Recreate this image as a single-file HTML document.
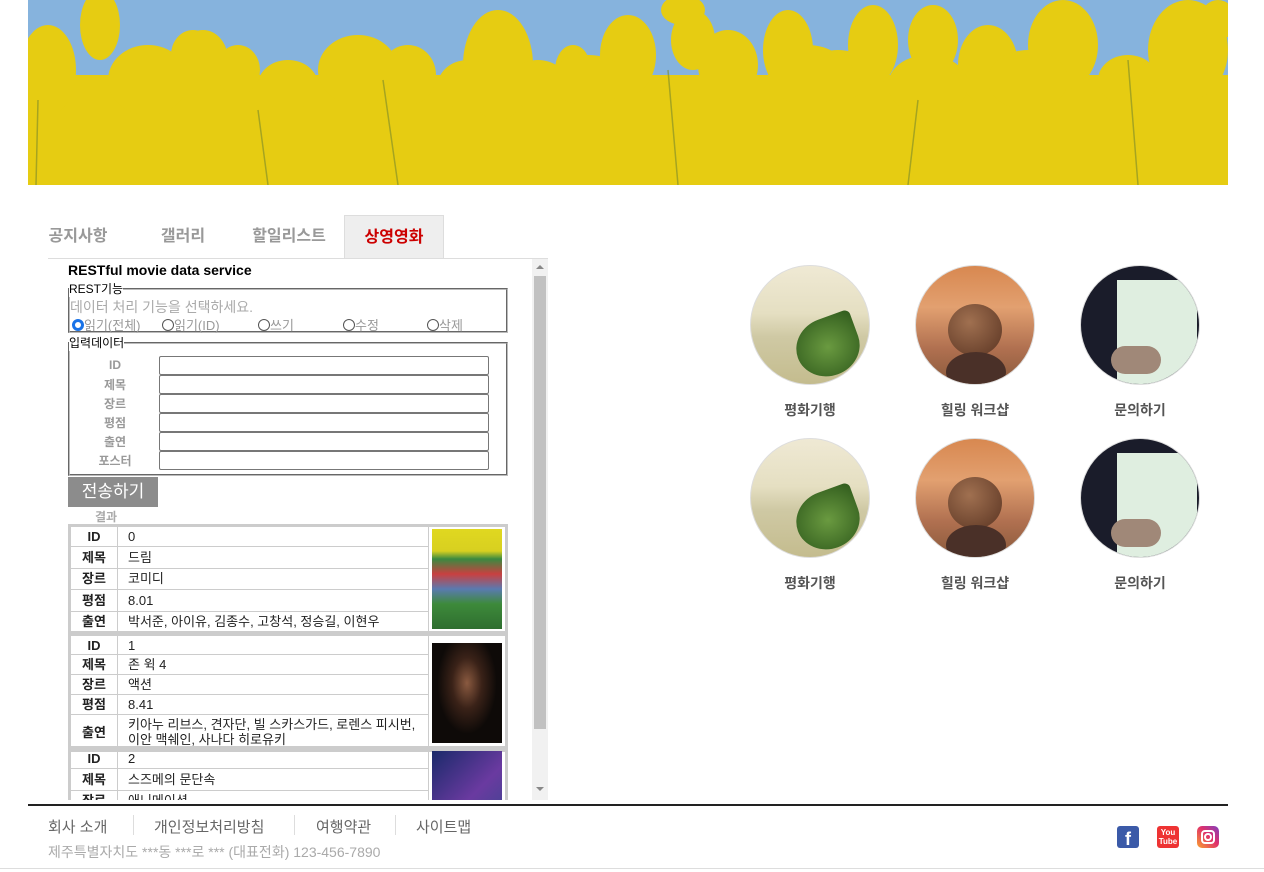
<!DOCTYPE html>
<html><head><meta charset="utf-8"><style>
*{margin:0;padding:0;box-sizing:border-box}
body{width:1264px;height:872px;background:#fff;position:relative;overflow:hidden;font-family:"Liberation Sans","Noto Sans CJK KR",sans-serif;color:#222}
.a{position:absolute}
.tab{position:absolute;top:215px;height:43px;font-size:16px;font-weight:bold;color:#999;line-height:43px;text-align:center}
.lab{position:absolute;left:70px;width:90px;text-align:center;font-size:12px;font-weight:bold;color:#999}
.inp{position:absolute;left:159px;width:330px;height:19px;border:1px solid #777;border-radius:2px}
table.m{position:absolute;left:68px;width:440px;border:3px solid #ccc;border-collapse:collapse;font-size:13px;table-layout:fixed}
table.m td{border:1px solid #ccc;padding:0 10px;height:20px;line-height:15px;word-break:break-all}
table.m td.l{width:48px;text-align:center;font-weight:bold;padding:0}
table.m td.p{width:78px;padding:2px 3px}
.c{position:absolute;width:120px;height:120px;border-radius:50%;overflow:hidden;border:1px solid #ddd}
.cl{position:absolute;width:160px;text-align:center;font-size:14px;font-weight:bold;color:#555}
.f{position:absolute;top:816px;font-size:15px;color:#666}
.sep{position:absolute;top:815px;width:1px;height:20px;background:#ddd}
</style></head><body>
<svg class="a" style="left:28px;top:0" width="1200" height="185" viewBox="0 0 1200 185">
<rect width="1200" height="185" fill="#86b3dd"/>
<g fill="#e6cc12">
<rect y="75" width="1200" height="110"/>
<ellipse cx="20" cy="70" rx="28" ry="45"/><ellipse cx="72" cy="25" rx="20" ry="35"/><ellipse cx="120" cy="80" rx="40" ry="35"/>
<ellipse cx="165" cy="55" rx="22" ry="25"/><ellipse cx="210" cy="70" rx="22" ry="25"/><ellipse cx="260" cy="85" rx="30" ry="25"/>
<ellipse cx="175" cy="60" rx="25" ry="30"/><ellipse cx="330" cy="70" rx="40" ry="35"/><ellipse cx="380" cy="75" rx="28" ry="30"/>
<ellipse cx="470" cy="65" rx="35" ry="55"/><ellipse cx="510" cy="85" rx="30" ry="25"/><ellipse cx="545" cy="70" rx="18" ry="25"/>
<ellipse cx="600" cy="55" rx="28" ry="40"/><ellipse cx="655" cy="10" rx="22" ry="15"/><ellipse cx="665" cy="40" rx="22" ry="30"/><ellipse cx="700" cy="65" rx="30" ry="35"/>
<ellipse cx="760" cy="50" rx="25" ry="40"/><ellipse cx="810" cy="75" rx="35" ry="25"/><ellipse cx="845" cy="45" rx="25" ry="40"/>
<ellipse cx="905" cy="40" rx="25" ry="35"/><ellipse cx="960" cy="65" rx="30" ry="40"/><ellipse cx="1035" cy="45" rx="35" ry="45"/>
<ellipse cx="1100" cy="80" rx="30" ry="25"/><ellipse cx="1160" cy="50" rx="40" ry="50"/><ellipse cx="1190" cy="20" rx="18" ry="20"/>
<ellipse cx="440" cy="85" rx="30" ry="25"/><ellipse cx="780" cy="75" rx="40" ry="30"/><ellipse cx="900" cy="85" rx="40" ry="30"/><ellipse cx="1000" cy="80" rx="40" ry="30"/><ellipse cx="560" cy="80" rx="40" ry="25"/>
</g>
<g stroke="#7a8a2a" stroke-width="1.5" opacity=".6"><line x1="10" y1="100" x2="8" y2="185"/><line x1="230" y1="110" x2="240" y2="185"/><line x1="355" y1="80" x2="370" y2="185"/><line x1="640" y1="70" x2="650" y2="185"/><line x1="890" y1="100" x2="880" y2="185"/><line x1="1100" y1="60" x2="1110" y2="185"/></g>
</svg>

<div class="tab" style="left:28px;width:100px">공지사항</div>
<div class="tab" style="left:133px;width:100px">갤러리</div>
<div class="tab" style="left:239px;width:100px">할일리스트</div>
<div class="tab" style="left:344px;width:100px;background:#eee;border:1px solid #ddd;border-bottom:none;color:#c00">상영영화</div>
<div class="a" style="left:48px;top:258px;width:500px;height:1px;background:#ddd"></div>

<div class="a" style="left:48px;top:259px;width:500px;height:541px;overflow:hidden">
<div class="a" style="left:484px;top:0;width:16px;height:541px;background:#f1f1f1"></div>
<div class="a" style="left:486px;top:17px;width:12px;height:453px;background:#c1c1c1"></div>
<div class="a" style="left:488px;top:6px;width:0;height:0;border-left:4px solid transparent;border-right:4px solid transparent;border-bottom:4px solid #888"></div>
<div class="a" style="left:488px;top:528px;width:0;height:0;border-left:4px solid transparent;border-right:4px solid transparent;border-top:4px solid #888"></div>
</div>

<div class="a" style="left:68px;top:262px;font-size:14px;font-weight:bold;color:#000">RESTful movie data service</div>
<div class="a" style="left:68px;top:288px;width:440px;height:45px;border:2px groove #bbb"></div>
<div class="a" style="left:69px;top:280px;font-size:12px;background:#fff;color:#000">REST기능</div>
<div class="a" style="left:70px;top:297px;font-size:14px;color:#aaa">데이터 처리 기능을 선택하세요.</div>
<div class="a" style="top:315px;left:72px;font-size:13px;color:#999;width:440px">
<span class="a" style="left:0"><span style="display:inline-block;width:12px;height:12px;border-radius:50%;border:3px solid #1a73e8;vertical-align:-1px"></span>읽기(전체)</span>
<span class="a" style="left:90px"><span style="display:inline-block;width:12px;height:12px;border-radius:50%;border:1px solid #555;vertical-align:-1px"></span>읽기(ID)</span>
<span class="a" style="left:186px"><span style="display:inline-block;width:12px;height:12px;border-radius:50%;border:1px solid #555;vertical-align:-1px"></span>쓰기</span>
<span class="a" style="left:271px"><span style="display:inline-block;width:12px;height:12px;border-radius:50%;border:1px solid #555;vertical-align:-1px"></span>수정</span>
<span class="a" style="left:355px"><span style="display:inline-block;width:12px;height:12px;border-radius:50%;border:1px solid #555;vertical-align:-1px"></span>삭제</span>
</div>
<div class="a" style="left:68px;top:342px;width:440px;height:134px;border:2px groove #bbb"></div>
<div class="a" style="left:69px;top:334px;font-size:12px;background:#fff;color:#000">입력데이터</div>
<div class="lab" style="top:358px">ID</div><div class="inp" style="top:356px"></div>
<div class="lab" style="top:376px">제목</div><div class="inp" style="top:375px"></div>
<div class="lab" style="top:395px">장르</div><div class="inp" style="top:394px"></div>
<div class="lab" style="top:414px">평점</div><div class="inp" style="top:413px"></div>
<div class="lab" style="top:433px">출연</div><div class="inp" style="top:432px"></div>
<div class="lab" style="top:452px">포스터</div><div class="inp" style="top:451px"></div>
<div class="a" style="left:68px;top:477px;width:90px;height:30px;background:#8c8c8c;color:#fff;font-size:17px;line-height:30px;text-align:center">전송하기</div>
<div class="a" style="left:95px;top:508px;font-size:12px;color:#aaa;font-weight:bold">결과</div>

<table class="m" style="top:524px"><tr><td class="l">ID</td><td>0</td><td class="p" rowspan="5"><div style="height:100px;background:linear-gradient(#e0d820 0,#d8d020 22%,#3a8a40 30%,#c94040 45%,#5a7ab0 60%,#3d8a3a 75%,#2f6e30 100%)"></div></td></tr>
<tr><td class="l">제목</td><td>드림</td></tr><tr><td class="l">장르</td><td>코미디</td></tr><tr><td class="l">평점</td><td>8.01</td></tr><tr><td class="l">출연</td><td>박서준, 아이유, 김종수, 고창석, 정승길, 이현우</td></tr></table>
<table class="m" style="top:633px"><tr><td class="l" style="height:17px">ID</td><td>1</td><td class="p" rowspan="5"><div style="height:100px;background:radial-gradient(ellipse at 50% 40%,#8a5a40 0,#3a2218 30%,#0e0a08 60%)"></div></td></tr>
<tr><td class="l" style="height:18px">제목</td><td>존 윅 4</td></tr><tr><td class="l" style="height:18px">장르</td><td>액션</td></tr><tr><td class="l" style="height:18px">평점</td><td>8.41</td></tr><tr><td class="l" style="height:36px">출연</td><td>키아누 리브스, 견자단, 빌 스카스가드, 로렌스 피시번, 이안 맥쉐인, 사나다 히로유키</td></tr></table>
<div class="a" style="left:48px;top:746px;width:484px;height:54px;overflow:hidden">
<table class="m" style="top:0;left:20px"><tr><td class="l" style="height:17px">ID</td><td>2</td><td class="p" rowspan="5"><div style="height:100px;background:linear-gradient(135deg,#1a2a6a,#6a3aa0 50%,#2a4a8a)"></div></td></tr>
<tr><td class="l" style="height:18px">제목</td><td>스즈메의 문단속</td></tr><tr><td class="l" style="height:18px">장르</td><td>애니메이션</td></tr><tr><td class="l">평점</td><td>-</td></tr><tr><td class="l">출연</td><td>-</td></tr></table>
</div>

<div class="c" style="left:750px;top:265px;background:linear-gradient(#efe9d4 0,#e5dfc2 40%,#cfc9a4 60%,#c4bc8e 100%)"><div class="a" style="left:45px;top:52px;width:64px;height:58px;border-radius:50% 10% 50% 50%;background:radial-gradient(#6a9a40,#2f5a1c);transform:rotate(-20deg)"></div></div>
<div class="c" style="left:915px;top:265px;background:linear-gradient(#d88850 0,#e2a070 35%,#b07050 70%,#8a5a3c 100%)"><div class="a" style="left:32px;top:38px;width:54px;height:52px;border-radius:50%;background:radial-gradient(circle at 40% 35%,#a07050,#5a3422)"></div><div class="a" style="left:30px;top:86px;width:60px;height:40px;border-radius:50%;background:#4a3028"></div></div>
<div class="c" style="left:1080px;top:265px;background:#1a1c2a"><div class="a" style="left:36px;top:14px;width:80px;height:110px;background:#dfeee0"></div><div class="a" style="left:30px;top:80px;width:50px;height:28px;border-radius:14px;background:#a08878"></div></div>
<div class="c" style="left:750px;top:438px;background:linear-gradient(#efe9d4 0,#e5dfc2 40%,#cfc9a4 60%,#c4bc8e 100%)"><div class="a" style="left:45px;top:52px;width:64px;height:58px;border-radius:50% 10% 50% 50%;background:radial-gradient(#6a9a40,#2f5a1c);transform:rotate(-20deg)"></div></div>
<div class="c" style="left:915px;top:438px;background:linear-gradient(#d88850 0,#e2a070 35%,#b07050 70%,#8a5a3c 100%)"><div class="a" style="left:32px;top:38px;width:54px;height:52px;border-radius:50%;background:radial-gradient(circle at 40% 35%,#a07050,#5a3422)"></div><div class="a" style="left:30px;top:86px;width:60px;height:40px;border-radius:50%;background:#4a3028"></div></div>
<div class="c" style="left:1080px;top:438px;background:#1a1c2a"><div class="a" style="left:36px;top:14px;width:80px;height:110px;background:#dfeee0"></div><div class="a" style="left:30px;top:80px;width:50px;height:28px;border-radius:14px;background:#a08878"></div></div>
<div class="cl" style="left:730px;top:400px">평화기행</div><div class="cl" style="left:895px;top:400px">힐링 워크샵</div><div class="cl" style="left:1060px;top:400px">문의하기</div>
<div class="cl" style="left:730px;top:573px">평화기행</div><div class="cl" style="left:895px;top:573px">힐링 워크샵</div><div class="cl" style="left:1060px;top:573px">문의하기</div>

<div class="a" style="left:28px;top:804px;width:1200px;height:2px;background:#222"></div>
<div class="f" style="left:48px">회사 소개</div><div class="sep" style="left:133px"></div>
<div class="f" style="left:154px">개인정보처리방침</div><div class="sep" style="left:294px"></div>
<div class="f" style="left:316px">여행약관</div><div class="sep" style="left:395px"></div>
<div class="f" style="left:416px">사이트맵</div>
<div class="a" style="left:48px;top:842px;font-size:14px;color:#aaa">제주특별자치도 ***동 ***로 *** (대표전화) 123-456-7890</div>
<div class="a" style="left:0;top:868px;width:1264px;height:1px;background:#ddd"></div>
<div class="a" style="left:1117px;top:826px;width:22px;height:22px;background:#3b5aa8;border-radius:3px;color:#fff;font-weight:bold;font-size:18px;text-align:center;line-height:26px">f</div>
<div class="a" style="left:1157px;top:826px;width:22px;height:22px;background:#e33;border-radius:3px;color:#fff;font-weight:bold;font-size:8px;text-align:center;line-height:9px;padding-top:2px">You<br>Tube</div>
<div class="a" style="left:1197px;top:826px;width:22px;height:22px;background:linear-gradient(45deg,#f9a030,#e0306a 55%,#8040c0);border-radius:5px"><div class="a" style="left:4px;top:4px;width:14px;height:14px;border:2px solid #fff;border-radius:4px"></div><div class="a" style="left:7px;top:7px;width:8px;height:8px;border:2px solid #fff;border-radius:50%"></div></div>
</body></html>
